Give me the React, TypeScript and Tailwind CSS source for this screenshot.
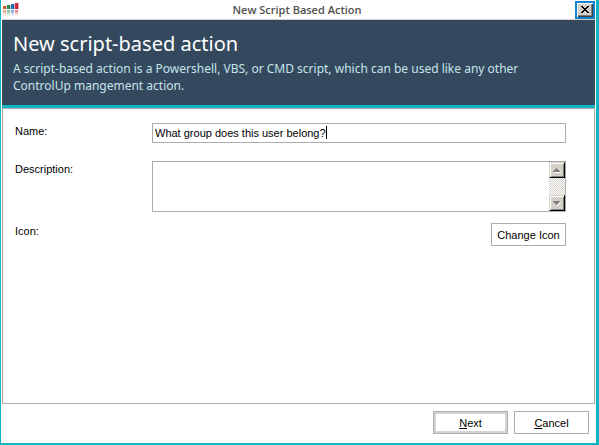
import { useState } from "react";

const bars = [
  { x: 0, y: 4, h: 3, color: "#d9652b" },
  { x: 4, y: 3, h: 4, color: "#2f9150" },
  { x: 8, y: 2, h: 5, color: "#2470b8" },
  { x: 12, y: 1, h: 6, color: "#e5203a" },
];

function Logo() {
  return (
    <svg width="16" height="16" viewBox="0 0 16 16" shapeRendering="crispEdges" aria-hidden="true">
      {bars.map((b) => (
        <g key={b.x} fill={b.color}>
          <rect x={b.x} y={b.y} width="4" height={b.h} opacity="0.35" />
          <rect x={b.x} y={b.y} width="3" height={b.h} />
          <rect x={b.x + 2} y={b.y} width="1" height={b.h} fill="#000" opacity="0.2" />
          <rect x={b.x} y="8" width="3" height="2" opacity="0.55" />
          <rect x={b.x} y="10" width="3" height="1" opacity="0.4" />
          <rect x={b.x} y="11" width="3" height="1" opacity="0.25" />
          <rect x={b.x} y="12" width="3" height="2" opacity="0.12" />
        </g>
      ))}
    </svg>
  );
}

function ScrollButton({ label, path, shadow }: { label: string; path: string; shadow: string }) {
  return (
    <button
      type="button"
      aria-label={label}
      className="h-4 w-4 border-t border-l border-r border-b border-t-[#d4d0c8] border-l-[#d4d0c8] border-r-black border-b-black bg-[#d4d0c8] shadow-[inset_1px_1px_0_#fff,inset_-1px_-1px_0_#808080]"
    >
      <svg width="14" height="14" viewBox="0 0 14 14" shapeRendering="crispEdges" aria-hidden="true">
        <path d={shadow} fill="#fff" />
        <path d={path} fill="#808080" />
      </svg>
    </button>
  );
}

export default function App() {
  const [name, setName] = useState("What group does this user belong?");
  const [description, setDescription] = useState("");

  return (
    <main className="flex h-screen flex-col border-t-0 border-r-3 border-b-2 border-l border-[#13b5c5] bg-white px-px font-['Liberation_Sans',Arial,sans-serif] text-[11px] leading-4 text-black">
      <div className="flex h-5 shrink-0 items-center border-b border-[#d4d0c8] pl-px">
        <Logo />
        <h2 className="flex-1 text-center font-['Open_Sans',sans-serif] text-[11px] leading-4 font-semibold text-[#505050]">
          New Script Based Action
        </h2>
        <button
          type="button"
          aria-label="Close"
          className="mt-px h-[18px] w-5 border-2 border-[#0d82d0] bg-[#d4d0c8] shadow-[inset_1px_1px_0_#fff,inset_-1px_-1px_0_#404040,inset_-2px_-2px_0_#808080]"
        >
          <svg width="16" height="14" viewBox="0 0 16 14" shapeRendering="crispEdges" aria-hidden="true">
            <path
              d="M4 3h2v1h1v1h2v-1h1v-1h2v1h-1v1h-1v1h-1v1h1v1h1v1h1v1h-2v-1h-1v-1h-2v1h-1v1h-2v-1h1v-1h1v-1h1v-1h-1v-1h-1v-1h-1z"
              fill="#000"
            />
          </svg>
        </button>
      </div>

      <header className="h-[88px] shrink-0 border-b-3 border-[#13b5c5] bg-[#34495e] px-[11px] pt-2 font-['Noto_Sans',sans-serif]">
        <h1 className="text-[20px] leading-8 text-white">New script-based action</h1>
        <p className="max-w-[540px] text-[12px] leading-[17px] text-[#c5e4ea]">
          A script-based action is a Powershell, VBS, or CMD script, which can be used like any other ControlUp
          mangement action.
        </p>
      </header>

      <section className="flex flex-1 flex-col border border-[#acacac] pt-3.5 pr-7 pl-3">
        <div className="flex">
          <label htmlFor="name" className="w-[137px] shrink-0">
            Name:
          </label>
          <div className="relative flex-1">
            <input
              id="name"
              type="text"
              value={name}
              onChange={(e) => setName(e.target.value)}
              className="block h-5 w-full border border-[#acacac] px-0.5 outline-none"
            />
            <span className="absolute top-[3px] left-[174px] h-[13px] w-px bg-black" aria-hidden="true" />
          </div>
        </div>

        <div className="mt-[18px] flex">
          <label htmlFor="description" className="w-[137px] shrink-0">
            Description:
          </label>
          <div className="flex h-[51px] flex-1 border border-[#acacac]">
            <textarea
              id="description"
              value={description}
              onChange={(e) => setDescription(e.target.value)}
              className="min-w-0 flex-1 resize-none px-0.5 outline-none"
            />
            <div className="flex w-4 flex-col justify-between bg-[repeating-conic-gradient(#d4d0c8_0_25%,#fff_0_50%)] bg-size-[2px_2px]">
              <ScrollButton label="Scroll up" path="M6 5h1v1h1v1h1v1h1v1h-7v-1h1v-1h1v-1h1z" shadow="M4 9h7v1h-7z" />
              <ScrollButton
                label="Scroll down"
                path="M3 5h7v1h-1v1h-1v1h-1v1h-1v-1h-1v-1h-1v-1h-1z"
                shadow="M10 6h1v1h-1v1h-1v1h-1v1h-1v-1h1v-1h1v-1h1z"
              />
            </div>
          </div>
        </div>

        <div className="mt-[11px] flex items-start justify-between">
          <label htmlFor="icon">Icon:</label>
          <button id="icon" type="button" className="h-[23px] w-[75px] border border-[#acacac] bg-white">
            Change Icon
          </button>
        </div>
      </section>

      <footer className="flex h-[39px] shrink-0 justify-end gap-1.5 pt-[7px] pr-1.5">
        <button
          type="button"
          className="h-[23px] w-[75px] border border-[#acacac] bg-white shadow-[inset_0_0_0_2px_#d4d4d4]"
        >
          <u>N</u>ext
        </button>
        <button type="button" className="h-[23px] w-[75px] border border-[#acacac] bg-white">
          <u>C</u>ancel
        </button>
      </footer>
    </main>
  );
}
